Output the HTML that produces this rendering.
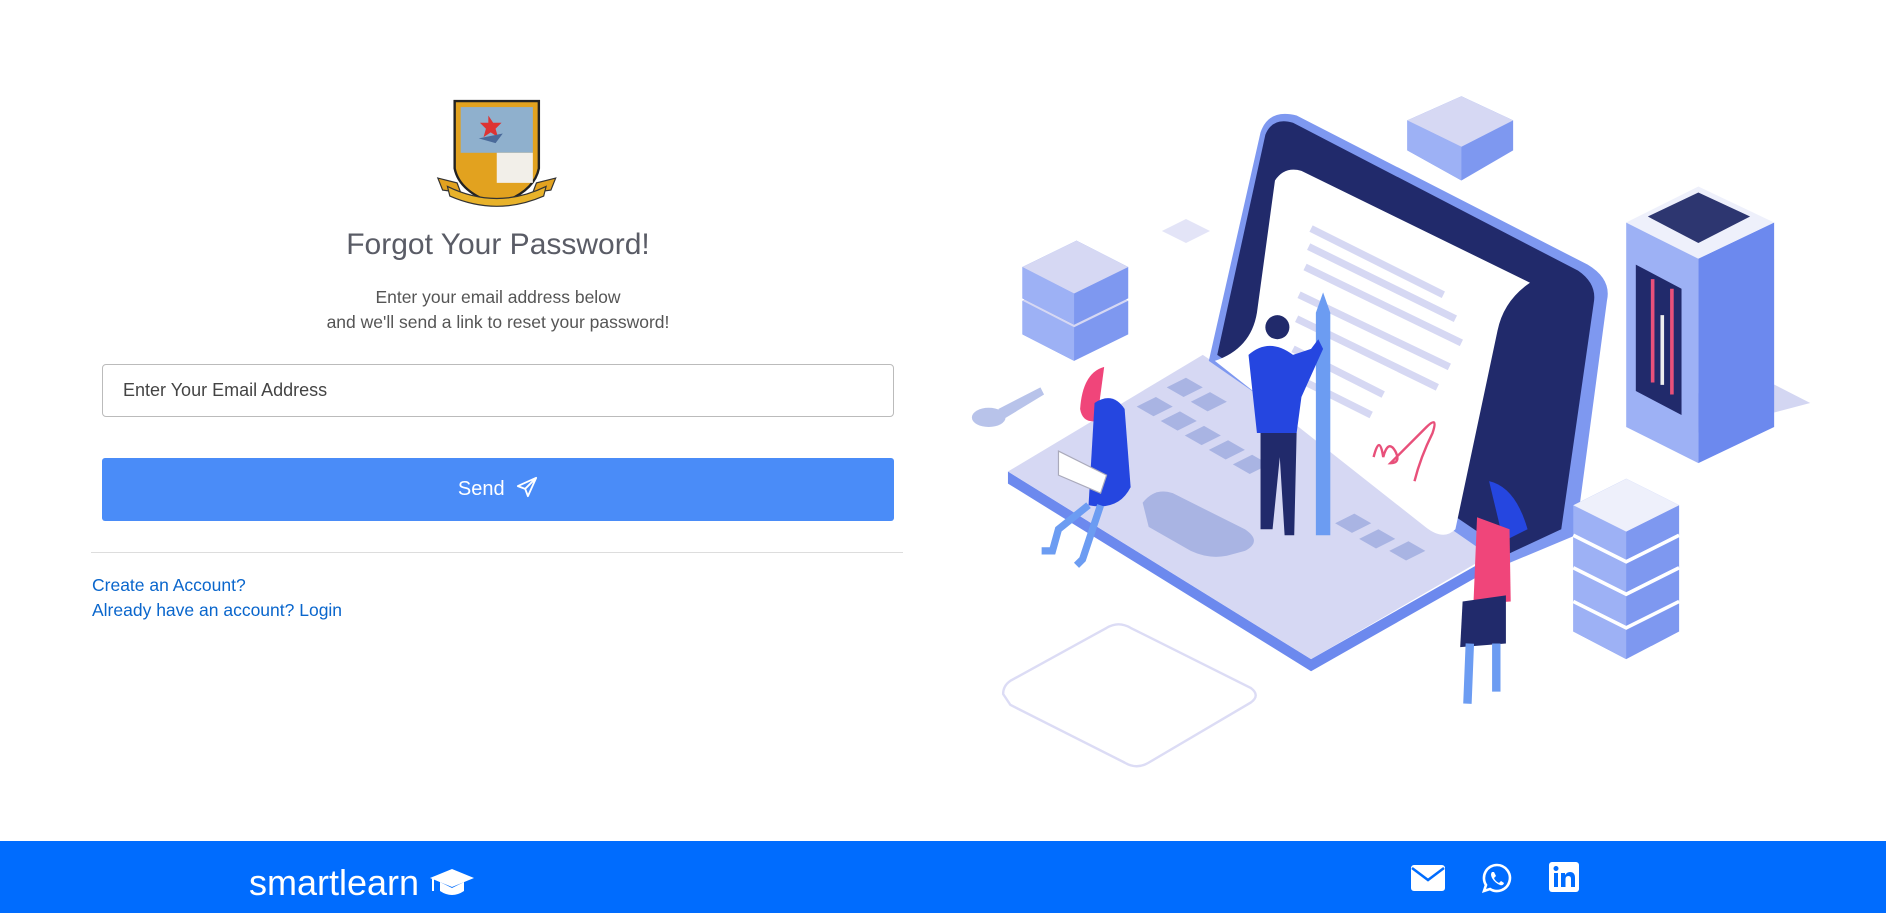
<!DOCTYPE html>
<html><head><meta charset="utf-8"><style>
html,body{margin:0;padding:0;width:1886px;height:913px;overflow:hidden;background:#fff;font-family:"Liberation Sans",Arial,sans-serif;}
.abs{position:absolute}
h1{position:absolute;left:0;width:996px;top:228px;margin:0;text-align:center;font-weight:normal;font-size:30px;color:#5a5c66}
.sub{position:absolute;left:0;width:996px;top:285px;text-align:center;font-size:17.5px;line-height:25px;color:#555}
.inp{position:absolute;left:102px;top:364px;width:792px;height:53px;border:1px solid #bbb;border-radius:4px;box-sizing:border-box;font-size:18px;color:#444;padding-left:20px;line-height:51px}
.btn{position:absolute;left:102px;top:458px;width:792px;height:63px;background:#4a8cf8;border-radius:3px;color:#fff;font-size:20px;text-align:center;line-height:63px}
.hr{position:absolute;left:91px;top:552px;width:812px;border-top:1px solid #ddd}
.lnk{position:absolute;left:92px;font-size:17.5px;color:#0a66cc}
.foot{position:absolute;left:0;top:841px;width:1886px;height:72px;background:#006cfe}
</style></head><body>
<svg class="abs" style="left:0;top:0" width="1886" height="913" viewBox="0 0 1568 759">
<g>
<path d="M378 84 L448 84 L448 140 Q444 160 413 170 Q382 160 378 140 Z" fill="#e2a21f" stroke="#222" stroke-width="2"/>
<rect x="383" y="89" width="60" height="38" fill="#8fb0cd"/>
<rect x="413" y="127" width="30" height="25" fill="#f2efe9"/>
<path d="M406 96 l4 6 l7 0 l-5 5 l2 7 l-6 -4 l-6 4 l2 -7 l-5 -5 l7 0z" fill="#d33"/>
<path d="M398 115 l20 -4 l-6 8z" fill="#4a6a9a"/>
<path d="M364 148 L380 152 L383 160 L368 158 Z M462 148 L446 152 L443 160 L458 158 Z" fill="#e2a21f" stroke="#333"/>
<path d="M372 155 Q413 175 454 155 L452 163 Q413 180 374 163 Z" fill="#e8b22a" stroke="#333"/>
</g>
<g>
<path d="M834 577 Q834 570 840 566 L920 522 Q930 516 940 522 L1040 572 Q1048 578 1040 584 L955 634 Q945 640 935 634 L840 586 Z" fill="none" stroke="#dcdcf5" stroke-width="2"/>
<path d="M838 392 L1090 548 L1245 460 L1245 470 L1090 558 L838 402 Z" fill="#6c89ee"/>
<path d="M838 392 L1000 295 L1245 458 L1090 548 Z" fill="#d6d8f3"/>
<path d="M950 418 Q960 405 975 410 L1035 440 Q1050 450 1035 458 L1020 462 Q1005 465 990 458 L955 438 Z" fill="#a9b4e3"/>
<g fill="#a9b4e3">
<path d="M945 338 l16 -8 l14 8 l-16 8z M965 350 l16 -8 l14 8 l-16 8z M985 362 l16 -8 l14 8 l-16 8z M1005 374 l16 -8 l14 8 l-16 8z M1025 386 l16 -8 l14 8 l-16 8z M1110 435 l16 -8 l14 8 l-16 8z M1130 448 l16 -8 l14 8 l-16 8z M1155 458 l16 -8 l14 8 l-16 8z M970 322 l16 -8 l14 8 l-16 8z M990 334 l16 -8 l14 8 l-16 8z"/>
</g>
<path d="M1005 300 L1048 110 Q1055 90 1078 96 L1320 220 Q1340 232 1336 250 L1310 445 L1250 470 Z" fill="#7e98f0"/>
<path d="M1012 295 L1052 112 Q1058 97 1075 102 L1312 225 Q1328 236 1325 252 L1298 440 L1255 460 Z" fill="#212a6b"/>
<path d="M1060 150 Q1068 138 1082 142 L1272 235 Q1250 250 1245 275 L1210 440 Q1200 450 1185 438 L1010 300 Q1040 290 1045 260 Z" fill="#fff"/>
<g stroke="#d6d8f3" stroke-width="6">
<line x1="1090" y1="190" x2="1200" y2="245"/><line x1="1088" y1="205" x2="1210" y2="265"/><line x1="1085" y1="222" x2="1215" y2="285"/><line x1="1080" y1="245" x2="1205" y2="305"/><line x1="1078" y1="265" x2="1195" y2="322"/><line x1="1075" y1="290" x2="1150" y2="328"/><line x1="1070" y1="310" x2="1140" y2="345"/>
</g>
<path d="M1142 380 q5 -20 8 0 q4 -15 10 -5 q5 10 -4 10 q20 -20 30 -30 q10 -10 5 5 q-10 20 -15 40" fill="none" stroke="#e8507a" stroke-width="2"/>
<path d="M1094 260 L1100 243 L1106 260 L1106 445 L1094 445 Z" fill="#6c9cf2"/>
<circle cx="1062" cy="272" r="10" fill="#212a6b"/>
<path d="M1038 295 Q1055 280 1075 295 L1090 290 L1096 282 L1100 290 L1082 330 L1078 360 L1045 360 Z" fill="#2546e0"/>
<path d="M1048 360 L1078 360 L1076 445 L1068 445 L1064 380 L1058 440 L1048 440 Z" fill="#212a6b"/>
<path d="M918 305 Q900 310 898 340 Q900 352 912 350 Z" fill="#f0457a"/>
<path d="M910 335 Q925 325 935 340 L940 405 Q930 425 905 420 Z" fill="#2546e0"/>
<path d="M880 375 L920 395 L915 410 L880 395 Z" fill="#fff" stroke="#aab" />
<path d="M905 420 L880 440 L875 458 L866 458 M915 420 L900 465 L895 470" fill="none" stroke="#6c9cf2" stroke-width="6"/>
<ellipse cx="822" cy="347" rx="14" ry="8" fill="#b8c3ea"/><path d="M830 340 L865 322 L868 328 L835 348Z" fill="#b8c3ea"/>
<path d="M1238 400 Q1260 405 1270 440 L1250 450 Z" fill="#2546e0"/>
<path d="M1228 430 L1255 440 L1256 500 L1225 502 Z" fill="#f0457a"/>
<path d="M1216 500 L1252 495 L1252 535 L1214 538 Z" fill="#212a6b"/>
<path d="M1222 535 L1220 585 M1244 535 L1244 575" stroke="#6c9cf2" stroke-width="7"/>
<g>
<path d="M850 250 L895 228 L938 250 L938 278 L893 300 L850 278 Z" fill="#7e98f0"/>
<path d="M850 250 L893 272 L893 300 L850 278Z" fill="#9db1f5"/>
<path d="M850 250 L895 228 L938 250 L893 272Z" fill="#d6d8f3"/>
<path d="M850 222 L895 200 L938 222 L938 248 L893 270 L850 248 Z" fill="#7e98f0"/>
<path d="M850 222 L893 244 L893 270 L850 248Z" fill="#9db1f5"/>
<path d="M850 222 L895 200 L938 222 L893 244Z" fill="#d6d8f3"/>
</g>
<path d="M966 192 l20 -10 l20 10 l-20 10z" fill="#e3e4f7"/>
<path d="M1170 100 L1215 80 L1258 100 L1258 125 L1215 150 L1170 125 Z" fill="#7e98f0"/>
<path d="M1170 100 L1215 122 L1215 150 L1170 125Z" fill="#9db1f5"/>
<path d="M1170 100 L1215 80 L1258 100 L1215 122Z" fill="#d6d8f3"/>
<path d="M1370 340 L1410 360 L1505 335 L1460 312 Z" fill="#d3d6f2"/>
<path d="M1352 185 L1412 215 L1412 385 L1352 355 Z" fill="#9db1f5"/>
<path d="M1412 215 L1475 185 L1475 355 L1412 385 Z" fill="#6c89ee"/>
<path d="M1352 185 L1412 155 L1475 185 L1412 215 Z" fill="#eef0fb"/>
<path d="M1370 180 L1412 160 L1455 180 L1412 202 Z" fill="#2d3670"/>
<path d="M1360 220 L1398 240 L1398 345 L1360 325 Z" fill="#212a6b"/>
<path d="M1374 232 L1374 318 M1390 240 L1390 328" stroke="#e8507a" stroke-width="3"/>
<path d="M1382 262 L1382 320" stroke="#eee" stroke-width="3"/>
<g>
<path d="M1308 420 L1352 398 L1396 420 L1396 525 L1352 548 L1308 525 Z" fill="#7e98f0"/>
<path d="M1308 420 L1352 442 L1352 548 L1308 525Z" fill="#9db1f5"/>
<path d="M1308 420 L1352 398 L1396 420 L1352 442Z" fill="#eef0fb"/>
<g stroke="#fff" stroke-width="3" fill="none"><path d="M1308 445 L1352 467 L1396 445 M1308 472 L1352 494 L1396 472 M1308 500 L1352 522 L1396 500"/></g>
</g>
</g>
</svg>
<h1>Forgot Your Password!</h1>
<div class="sub">Enter your email address below<br>and we'll send a link to reset your password!</div>
<div class="inp">Enter Your Email Address</div>
<div class="btn">Send <svg width="22" height="22" viewBox="0 0 24 24" style="vertical-align:-3px;margin-left:6px" fill="none" stroke="#fff" stroke-width="2" stroke-linejoin="round"><path d="M22 2 L2 11 L10 14 L13 22 Z M10 14 L22 2"/></svg></div>
<div class="hr"></div>
<div class="lnk" style="top:575px">Create an Account?</div>
<div class="lnk" style="top:600px">Already have an account? Login</div>
<div class="foot">
<div class="abs" style="left:249px;top:21px;font-size:36px;color:#fff">smartlearn <svg width="46" height="30" viewBox="0 0 46 30" style="vertical-align:-2px"><path d="M23 2 L45 11 L23 20 L1 11Z" fill="#fff"/><path d="M11 15 L11 24 Q23 32 35 24 L35 15 L23 21Z" fill="#fff"/><path d="M4 12 L4 24" stroke="#fff" stroke-width="2"/></svg></div>
<svg class="abs" style="left:1411px;top:24px" width="34" height="26" viewBox="0 0 34 26"><rect width="34" height="26" rx="3" fill="#fff"/><path d="M1 3 L17 15 L33 3" fill="none" stroke="#006cfe" stroke-width="2.5"/></svg>
<svg class="abs" style="left:1481px;top:21px" width="32" height="32" viewBox="0 0 32 32"><path d="M16 3 A13 13 0 1 1 9 27 L3 29 L5 23 A13 13 0 0 1 16 3Z" fill="none" stroke="#fff" stroke-width="2.6"/><path d="M11 10 q-2 2 0 6 q3 5 8 7 q3 1 4 -2 l-3 -2 l-2 2 q-4 -2 -5 -5 l2 -2 l-2 -4z" fill="#fff"/></svg>
<svg class="abs" style="left:1549px;top:21px" width="30" height="30" viewBox="0 0 30 30"><rect width="30" height="30" rx="3" fill="#fff"/><rect x="5" y="11" width="4" height="14" fill="#006cfe"/><circle cx="7" cy="6.5" r="2.5" fill="#006cfe"/><path d="M12 11 h4 v2 q2 -3 5 -3 q5 0 5 6 v9 h-4 v-8 q0 -3 -2.5 -3 q-3 0 -3 3 v8 h-4.5z" fill="#006cfe"/></svg>
</div>
</body></html>
